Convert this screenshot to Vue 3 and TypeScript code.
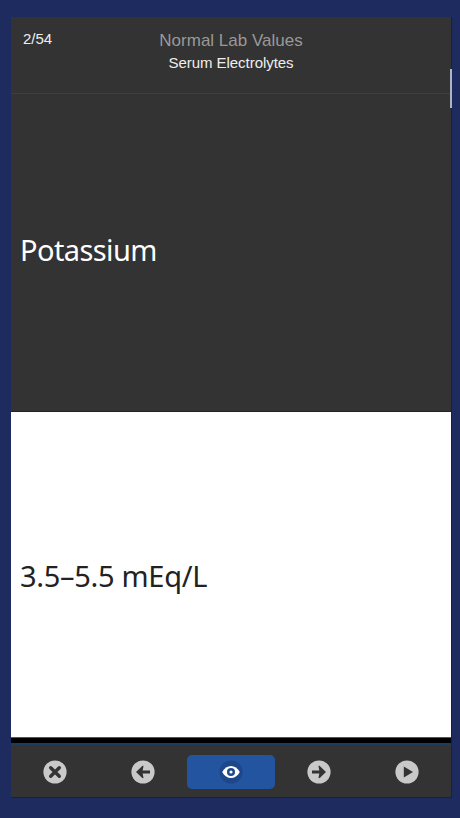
<script setup lang="ts">
import { ref } from 'vue'

interface Card {
  index: number
  total: number
  deck: string
  topic: string
  term: string
  answer: string
}

type Action = 'close' | 'previous' | 'reveal' | 'next' | 'play'

const card: Card = {
  index: 2,
  total: 54,
  deck: 'Normal Lab Values',
  topic: 'Serum Electrolytes',
  term: 'Potassium',
  answer: '3.5–5.5 mEq/L',
}

const actions: Action[] = ['close', 'previous', 'reveal', 'next', 'play']
const active = ref<Action>('reveal')
</script>

<template>
  <div class="page">
    <main class="viewer">
      <header class="header">
        <span class="counter">{{ card.index }}/{{ card.total }}</span>
        <div class="titles">
          <h1 class="deck">{{ card.deck }}</h1>
          <p class="topic">{{ card.topic }}</p>
        </div>
        <span></span>
      </header>
      <section class="front"><span class="term">{{ card.term }}</span></section>
      <section class="back"><span class="answer">{{ card.answer }}</span></section>
      <nav class="toolbar">
        <button
          v-for="action in actions"
          :key="action"
          class="action"
          :class="{ active: active === action }"
          :aria-label="action"
        >
          <svg class="icon" viewBox="0 0 28 28">
            <circle class="disc" cx="14" cy="14" r="11.6" />
            <path v-if="action === 'close'" class="stroke" d="M9.7 9.7l8.6 8.6M18.3 9.7l-8.6 8.6" />
            <g v-else-if="action === 'previous'">
              <path class="shaft" d="M12 14h9" />
              <path class="solid" d="M7 14l6-5.7c1.1-.9 1.8-.3 1.3 1L13.4 14l.9 4.7c.5 1.3-.2 1.9-1.3 1z" />
            </g>
            <g v-else-if="action === 'next'">
              <path class="shaft" d="M7 14h9" />
              <path class="solid" d="M21 14l-6-5.7c-1.1-.9-1.8-.3-1.3 1l.9 4.7-.9 4.7c-.5 1.3.2 1.9 1.3 1z" />
            </g>
            <path v-else-if="action === 'play'" class="solid" d="M10.8 8.6L20 14l-9.2 5.4z" />
            <g v-else>
              <path class="eye" d="M5.2 14C9.4 6 18.6 6 22.8 14 18.6 22 9.4 22 5.2 14z" />
              <circle class="iris" cx="14" cy="14" r="4" />
              <circle class="pupil" cx="14" cy="14" r="1.6" />
            </g>
          </svg>
        </button>
      </nav>
    </main>
    <div class="scroll-edge"></div>
  </div>
</template>

<style>
body {
  margin: 0;
  background: #1d2b5f;
}
</style>

<style scoped>
.page {
  position: relative;
  box-sizing: border-box;
  width: 460px;
  height: 818px;
  padding: 17px 8px 20px 11px;
  overflow: hidden;
  background: #1d2b5f;
  font-family: "Liberation Sans", Arial, sans-serif;
}

.viewer {
  display: flex;
  flex-direction: column;
  box-sizing: border-box;
  width: 441px;
  height: 781px;
  background: #333;
  border-right: 1px solid #1b222c;
}

.header {
  display: grid;
  grid-template-columns: 80px 1fr 80px;
  box-sizing: border-box;
  height: 77px;
  border-bottom: 1px solid #3e3e3e;
}

.counter {
  padding: 13px 0 0 12px;
  color: #eee;
  font-size: 15px;
  line-height: 18px;
}

.titles {
  padding-top: 13px;
  text-align: center;
  white-space: nowrap;
}

.deck {
  margin: 0;
  color: #999;
  font-size: 17px;
  font-weight: 400;
  line-height: 22px;
}

.topic {
  margin: 2px 0 0;
  color: #eee;
  font-size: 15px;
  letter-spacing: -0.04px;
  line-height: 18px;
}

.front,
.back {
  display: flex;
  align-items: center;
  box-sizing: border-box;
  padding-left: 9px;
  font-family: "Noto Sans", sans-serif;
  font-size: 29px;
  line-height: 40px;
}

.front {
  height: 318px;
  padding-bottom: 5px;
  border-bottom: 1px solid #222;
  color: #fff;
  letter-spacing: -0.6px;
}

.back {
  height: 326px;
  padding-top: 2px;
  border-bottom: 1px solid #555;
  background: #fff;
  color: #222;
  letter-spacing: -0.3px;
}

.toolbar {
  display: flex;
  box-sizing: border-box;
  height: 60px;
  padding-top: 12px;
  border-top: 5px solid #000;
  border-bottom: 1px solid #222;
  background: linear-gradient(#203b60 0 2px, #333 2px);
}

.action {
  display: flex;
  flex: 1;
  align-items: center;
  justify-content: center;
  height: 34px;
  padding: 0;
  border: 0;
  border-radius: 5px;
  background: transparent;
}

.active {
  background: #2354a0;
}

.icon {
  width: 28px;
  height: 28px;
}

.disc {
  fill: #c9c9c9;
}

.active .disc {
  fill: #1d468b;
}

.stroke,
.shaft {
  fill: none;
  stroke: #333;
  stroke-linecap: round;
  stroke-width: 3.4;
}

.shaft {
  stroke-linecap: butt;
  stroke-width: 3;
}

.solid {
  fill: #333;
}

.eye,
.pupil {
  fill: #fff;
}

.iris {
  fill: #1d468b;
}

.scroll-edge {
  position: absolute;
  top: 69px;
  left: 450px;
  width: 2px;
  height: 39px;
  background: #aeb4c2;
}
</style>
